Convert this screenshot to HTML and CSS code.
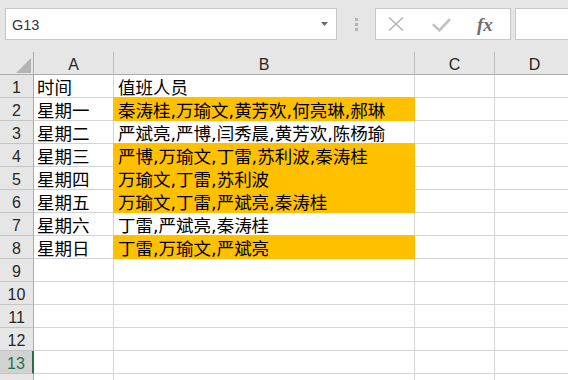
FILE: index.html
```html
<!DOCTYPE html>
<html lang="zh-CN">
<head>
<meta charset="utf-8">
<title>Sheet</title>
<link rel="stylesheet" href="styles.css">
</head>
<body>
<div class="formula-bar">
  <div class="name-box">
    <span class="name">G13</span>
    <svg class="caret" width="7" height="4" viewBox="0 0 7 4"><path d="M0 0 H7 L3.5 4 Z" fill="#6b6b6b"/></svg>
  </div>
  <div class="grip"><i></i><i></i><i></i></div>
  <div class="fx-buttons">
    <svg class="btn-x" width="16" height="14" viewBox="0 0 16 14"><path d="M1 0.5 L15 13.5 M15 0.5 L1 13.5" stroke="#b2b2b2" stroke-width="1.4" fill="none"/></svg>
    <svg class="btn-ok" width="19" height="14" viewBox="0 0 19 14"><path d="M0.8 6.3 L7.5 12.5 L18 1" stroke="#c2c2c2" stroke-width="2.6" fill="none"/></svg>
    <span class="fx">fx</span>
  </div>
  <div class="formula-input"></div>
</div>
<div class="sheet">
  <div class="corner"><span class="tri"></span></div>
  <div class="ch">A</div><div class="ch">B</div><div class="ch">C</div><div class="ch">D</div>

  <div class="rh">1</div><div class="c">时间</div><div class="c cb">值班人员</div><div class="c"></div><div class="c"></div>
  <div class="rh">2</div><div class="c">星期一</div><div class="c cb fill">秦涛桂,万瑜文,黄芳欢,何亮琳,郝琳</div><div class="c"></div><div class="c"></div>
  <div class="rh">3</div><div class="c">星期二</div><div class="c cb">严斌亮,严博,闫秀晨,黄芳欢,陈杨瑜</div><div class="c"></div><div class="c"></div>
  <div class="rh">4</div><div class="c">星期三</div><div class="c cb fill">严博,万瑜文,丁雷,苏利波,秦涛桂</div><div class="c"></div><div class="c"></div>
  <div class="rh">5</div><div class="c">星期四</div><div class="c cb fill">万瑜文,丁雷,苏利波</div><div class="c"></div><div class="c"></div>
  <div class="rh">6</div><div class="c">星期五</div><div class="c cb fill">万瑜文,丁雷,严斌亮,秦涛桂</div><div class="c"></div><div class="c"></div>
  <div class="rh">7</div><div class="c">星期六</div><div class="c cb">丁雷,严斌亮,秦涛桂</div><div class="c"></div><div class="c"></div>
  <div class="rh">8</div><div class="c">星期日</div><div class="c cb fill">丁雷,万瑜文,严斌亮</div><div class="c"></div><div class="c"></div>
  <div class="rh">9</div><div class="c"></div><div class="c cb"></div><div class="c"></div><div class="c"></div>
  <div class="rh">10</div><div class="c"></div><div class="c cb"></div><div class="c"></div><div class="c"></div>
  <div class="rh">11</div><div class="c"></div><div class="c cb"></div><div class="c"></div><div class="c"></div>
  <div class="rh">12</div><div class="c"></div><div class="c cb"></div><div class="c"></div><div class="c"></div>
  <div class="rh sel">13</div><div class="c"></div><div class="c cb"></div><div class="c"></div><div class="c"></div>
  <div class="rh"></div><div class="c"></div><div class="c cb"></div><div class="c"></div><div class="c"></div>
</div>
</body>
</html>
```
FILE: styles.css
```css
html, body {
  margin: 0;
  padding: 0;
}
body {
  width: 568px;
  height: 380px;
  overflow: hidden;
  background: #ffffff;
  font-family: "Liberation Sans", Arial, sans-serif;
}

/* formula bar */
.formula-bar {
  height: 52px;
  box-sizing: border-box;
  background: #e6e6e6;
  display: flex;
  align-items: flex-start;
  padding: 8px 0 0 5px;
}
.name-box {
  width: 332px;
  height: 32px;
  box-sizing: border-box;
  border: 1px solid #c6c6c6;
  background: #ffffff;
  display: flex;
  align-items: center;
  justify-content: space-between;
  padding: 1px 8px 0 6px;
}
.name {
  font-size: 14.5px;
  color: #333333;
}
.caret {
  display: block;
  margin-top: -1px;
}
.grip {
  width: 38px;
  height: 32px;
  display: flex;
  flex-direction: column;
  align-items: center;
  justify-content: center;
  gap: 2px;
}
.grip i {
  display: block;
  width: 3px;
  height: 3px;
  background: #b4b4b4;
}
.fx-buttons {
  width: 136px;
  height: 32px;
  box-sizing: border-box;
  border: 1px solid #c6c6c6;
  background: #ffffff;
  display: flex;
  align-items: center;
}
.btn-x {
  display: block;
  margin-left: 12px;
  margin-top: -1px;
}
.btn-ok {
  display: block;
  margin-left: 28px;
  margin-top: 1px;
}
.fx {
  margin-left: 26px;
  font-family: "Liberation Serif", "Times New Roman", serif;
  font-style: italic;
  font-weight: bold;
  font-size: 19px;
  color: #6e6e6e;
  line-height: 1;
}
.formula-input {
  flex: 1;
  height: 32px;
  box-sizing: border-box;
  margin-left: 4px;
  margin-right: -4px;
  border: 1px solid #c6c6c6;
  background: #ffffff;
}

/* sheet grid */
.sheet {
  display: grid;
  grid-template-columns: 34px 80px 301px 80px 80px;
  grid-auto-rows: 23px;
  background: #ffffff;
}
.corner {
  background: #e6e6e6;
  border-right: 1px solid #ababab;
  border-bottom: 1px solid #ababab;
  display: flex;
  justify-content: flex-end;
  align-items: flex-end;
  padding: 0 2px 1px 0;
}
.tri {
  display: block;
  width: 0;
  height: 0;
  border-left: 15px solid transparent;
  border-bottom: 15px solid #b4b4b4;
}
.ch {
  background: #e6e6e6;
  border-right: 1px solid #bdbdbd;
  border-bottom: 1px solid #ababab;
  text-align: center;
  font-size: 16px;
  color: #262626;
  padding-top: 2px;
  line-height: 21px;
}
.rh {
  background: #e6e6e6;
  border-right: 1px solid #ababab;
  border-bottom: 1px solid #c4c4c4;
  text-align: center;
  font-size: 16px;
  color: #262626;
  padding-top: 2px;
  line-height: 21px;
}
.rh.sel {
  background: #d2d2d2;
  color: #217346;
  border-right: 2px solid #217346;
}
.c {
  border-right: 1px solid #d4d4d4;
  border-bottom: 1px solid #d4d4d4;
  font-family: "DejaVu Sans", "Noto Sans CJK SC", sans-serif;
  font-size: 17.5px;
  color: #000000;
  padding: 3px 0 0 3px;
  line-height: 20px;
  white-space: nowrap;
}
.cb {
  padding-left: 4px;
}
.fill {
  background: #ffc000;
  border-color: #ffc000;
  box-shadow: 0 -1px 0 0 #ffc000, -1px 0 0 0 #ffc000, -1px -1px 0 0 #ffc000;
}
```
